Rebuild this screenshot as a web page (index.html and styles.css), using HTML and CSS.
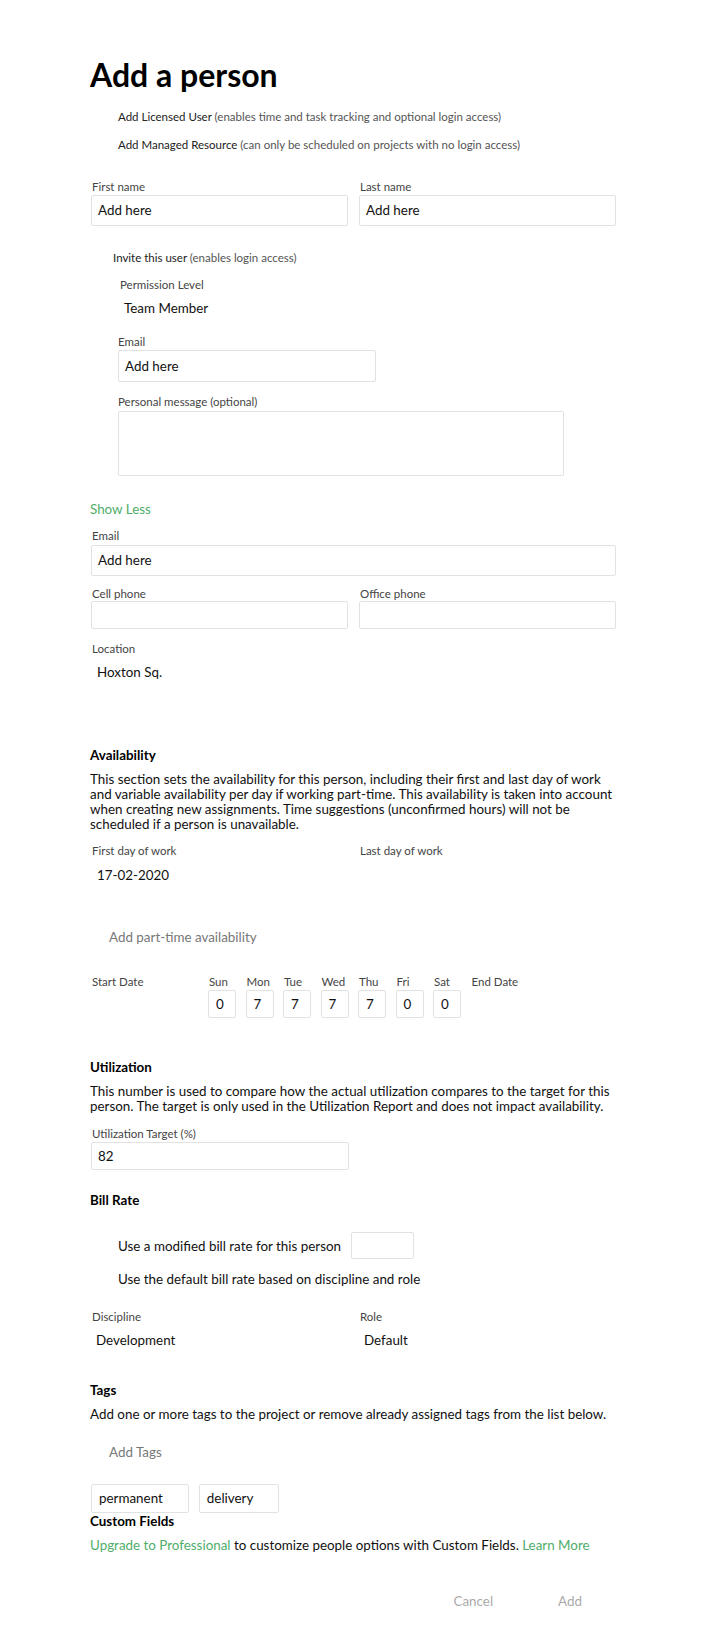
FILE: index.html
```html
<!DOCTYPE html>
<html lang="en">
<head>
<meta charset="utf-8">
<title>Add a person</title>
<link rel="stylesheet" href="styles.css">
</head>
<body>
<main class="page">
  <h1 class="title">Add a person</h1>

  <div class="option opt-first">Add Licensed User <span class="muted">(enables time and task tracking and optional login access)</span></div>
  <div class="option opt-second">Add Managed Resource <span class="muted">(can only be scheduled on projects with no login access)</span></div>

  <div class="row two names">
    <div class="field">
      <div class="label">First name</div>
      <div class="input">Add here</div>
    </div>
    <div class="field">
      <div class="label">Last name</div>
      <div class="input">Add here</div>
    </div>
  </div>

  <div class="invite">Invite this user <span class="muted">(enables login access)</span></div>
  <div class="invite-body">
    <div class="label perm-label">Permission Level</div>
    <div class="value perm-value">Team Member</div>
    <div class="label inv-email-label">Email</div>
    <div class="input inv-email">Add here</div>
    <div class="label msg-label">Personal message (optional)</div>
    <div class="textarea"></div>
  </div>

  <div class="link show-less">Show Less</div>

  <div class="label email-label">Email</div>
  <div class="input email-input">Add here</div>

  <div class="row two phones">
    <div class="field">
      <div class="label">Cell phone</div>
      <div class="input short"></div>
    </div>
    <div class="field">
      <div class="label">Office phone</div>
      <div class="input short"></div>
    </div>
  </div>

  <div class="label loc-label">Location</div>
  <div class="value loc-value">Hoxton Sq.</div>

  <h2 class="section avail-title">Availability</h2>
  <p class="desc avail-desc">This section sets the availability for this person, including their first and last day of work and variable availability per day if working part-time. This availability is taken into account when creating new assignments. Time suggestions (unconfirmed hours) will not be scheduled if a person is unavailable.</p>

  <div class="row two days-work">
    <div class="field">
      <div class="label">First day of work</div>
      <div class="value first-day">17-02-2020</div>
    </div>
    <div class="field">
      <div class="label">Last day of work</div>
    </div>
  </div>

  <div class="ghost part-time">Add part-time availability</div>

  <div class="week">
    <div class="label start-date">Start Date</div>
    <div class="day"><div class="label">Sun</div><div class="daybox">0</div></div>
    <div class="day"><div class="label">Mon</div><div class="daybox">7</div></div>
    <div class="day"><div class="label">Tue</div><div class="daybox">7</div></div>
    <div class="day"><div class="label">Wed</div><div class="daybox">7</div></div>
    <div class="day"><div class="label">Thu</div><div class="daybox">7</div></div>
    <div class="day"><div class="label">Fri</div><div class="daybox">0</div></div>
    <div class="day"><div class="label">Sat</div><div class="daybox">0</div></div>
    <div class="label end-date">End Date</div>
  </div>

  <h2 class="section util-title">Utilization</h2>
  <p class="desc util-desc">This number is used to compare how the actual utilization compares to the target for this person. The target is only used in the Utilization Report and does not impact availability.</p>
  <div class="label util-label">Utilization Target (%)</div>
  <div class="input short half">82</div>

  <h2 class="section bill-title">Bill Rate</h2>
  <div class="bill-option modified">
    <span>Use a modified bill rate for this person</span>
    <span class="ratebox"></span>
  </div>
  <div class="bill-option default">Use the default bill rate based on discipline and role</div>

  <div class="row two discipline">
    <div class="field">
      <div class="label">Discipline</div>
      <div class="value">Development</div>
    </div>
    <div class="field">
      <div class="label">Role</div>
      <div class="value">Default</div>
    </div>
  </div>

  <h2 class="section tags-title">Tags</h2>
  <p class="desc tags-desc">Add one or more tags to the project or remove already assigned tags from the list below.</p>
  <div class="ghost add-tags">Add Tags</div>
  <div class="tags">
    <span class="tag">permanent</span>
    <span class="tag">delivery</span>
  </div>

  <h2 class="section custom-title">Custom Fields</h2>
  <p class="desc custom-desc"><span class="link">Upgrade to Professional</span> to customize people options with Custom Fields. <span class="link">Learn More</span></p>

  <div class="actions">
    <span class="btn">Cancel</span>
    <span class="btn">Add</span>
  </div>
</main>
</body>
</html>
```

FILE: styles.css
```css
* { box-sizing: border-box; }

html, body {
  margin: 0;
  padding: 0;
  background: #ffffff;
}

body {
  font-family: Lato, "Open Sans", "Liberation Sans", sans-serif;
  color: #111111;
  font-size: 13.4px;
}

.page {
  width: 616px;
  padding: 56px 0 40px 90px;
}

.title {
  margin: 0;
  font-size: 32px;
  line-height: 38px;
  font-weight: 700;
  color: #000;
}

.option {
  font-size: 11.5px;
  line-height: 16px;
  padding-left: 28px;
  color: #222;
}
.opt-first { margin-top: 15px; }
.opt-second { margin-top: 12px; }

.muted { color: #555; }

.label {
  font-size: 11.5px;
  line-height: 14px;
  color: #444;
  padding-left: 2px;
}

.value {
  font-size: 13.4px;
  line-height: 18px;
  color: #111;
}

.row.two {
  display: grid;
  grid-template-columns: 257px 257px;
  column-gap: 11px;
  padding-left: 1px;
}
.row.two .label { padding-left: 1px; }

.input {
  height: 31px;
  border: 1px solid #e2e2e2;
  border-radius: 2px;
  background: #fff;
  font-size: 13.4px;
  line-height: 29px;
  padding-left: 6px;
  color: #111;
}
.input.short { height: 28px; line-height: 26px; }

.field .input { margin-top: 1px; }

.names { margin-top: 27px; }

.invite {
  margin-top: 24px;
  padding-left: 23px;
  font-size: 11.5px;
  line-height: 16px;
  color: #222;
}

.invite-body { padding-left: 28px; }
.perm-label { margin-top: 12px; }
.perm-value { margin-top: 7px; padding-left: 6px; }
.inv-email-label { margin-top: 18px; padding-left: 0; }
.inv-email { margin-top: 1px; width: 258px; height: 32px; line-height: 30px; }
.msg-label { margin-top: 13px; padding-left: 0; }
.textarea {
  margin-top: 2px;
  width: 446px;
  height: 65px;
  border: 1px solid #e2e2e2;
  border-radius: 2px;
}

.link { color: #4fae6a; }
.show-less {
  margin-top: 24px;
  font-size: 13.4px;
  line-height: 18px;
}

.email-label { margin-top: 11px; }
.email-input { margin: 2px 0 0 1px; width: 525px; }

.phones { margin-top: 11px; }
.phones .field .input { margin-top: 0; }

.loc-label { margin-top: 13px; }
.loc-value { margin-top: 7px; padding-left: 7px; }

.section {
  margin: 0;
  font-size: 13.4px;
  line-height: 18px;
  font-weight: 700;
  color: #000;
}

.desc {
  margin: 0;
  font-size: 13.4px;
  line-height: 15px;
  color: #111;
  width: 526px;
}

.avail-title { margin-top: 65px; }
.avail-desc { margin-top: 8px; }

.days-work { margin-top: 12px; }
.first-day { margin-top: 8px; padding-left: 6px; }

.ghost {
  font-size: 13.4px;
  line-height: 18px;
  color: #777;
  padding-left: 19px;
}
.part-time { margin-top: 44px; }

.week {
  margin-top: 29px;
  display: flex;
  align-items: flex-start;
}
.start-date { width: 118px; }
.day { width: 37.5px; }
.day .label { padding-left: 1px; }
.daybox {
  margin-top: 1px;
  width: 28px;
  height: 28px;
  border: 1px solid #e2e2e2;
  border-radius: 2px;
  font-size: 13.4px;
  line-height: 26px;
  padding-left: 7px;
  color: #111;
}
.end-date { padding-left: 1px; }

.util-title { margin-top: 40px; }
.util-desc { margin-top: 8px; }
.util-label { margin-top: 13px; }
.half { width: 258px; margin: 1px 0 0 1px; }

.bill-title { margin-top: 21px; }
.bill-option {
  padding-left: 28px;
  font-size: 13.4px;
  line-height: 18px;
  color: #111;
}
.modified {
  margin-top: 23px;
  display: flex;
  align-items: center;
  gap: 10px;
}
.ratebox {
  width: 63px;
  height: 27px;
  border: 1px solid #e2e2e2;
  border-radius: 2px;
}
.default { margin-top: 11px; }

.discipline { margin-top: 22px; }
.discipline .value { margin-top: 7px; padding-left: 5px; }

.tags-title { margin-top: 32px; }
.tags-desc { margin-top: 6px; line-height: 18px; width: 580px; }
.add-tags { margin-top: 20px; }

.tags {
  margin-top: 23px;
  display: flex;
  gap: 10px;
  padding-left: 1px;
}
.tag {
  height: 29px;
  border: 1px solid #e2e2e2;
  border-radius: 2px;
  font-size: 13.4px;
  line-height: 27px;
  padding: 0 25px 0 7px;
  color: #111;
}

.custom-title { margin-top: 0; line-height: 16px; }
.custom-desc { margin-top: 7px; line-height: 18px; width: 580px; }

.actions {
  margin-top: 38px;
  width: 526px;
  display: flex;
  justify-content: flex-end;
  gap: 65px;
  padding-right: 34px;
}
.btn {
  font-size: 13.4px;
  line-height: 18px;
  color: #aaa;
}
```
